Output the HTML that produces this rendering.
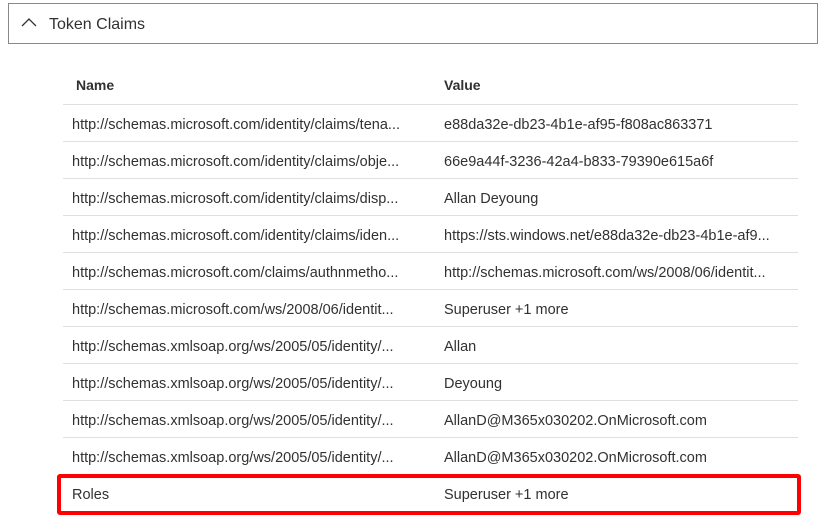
<!DOCTYPE html>
<html><head><meta charset="utf-8"><style>
html,body{margin:0;padding:0;background:#fff;width:829px;height:518px;overflow:hidden;font-family:"Liberation Sans",sans-serif;color:#323130}
.hdr{position:absolute;left:8px;top:3px;width:808px;height:39px;border:1px solid #8a8886;box-sizing:content-box}
.hdr svg{position:absolute;left:11px;top:13px}
.hdr span{position:absolute;left:40px;top:12px;font-size:16px;color:#323130}
.th{position:absolute;top:77px;font-size:14px;font-weight:bold;color:#323130}
.line{position:absolute;left:63px;width:735px;height:1px;background:#e1dfdd}
.c{position:absolute;font-size:14.5px;white-space:nowrap;overflow:hidden;color:#323130}
.n{left:72px;width:365px}.v{left:444px;width:354px}
.red{position:absolute;left:57px;top:474px;width:736px;height:33px;border:4px solid #f00;border-radius:3px}
</style></head><body>
<div class="hdr"><svg width="18" height="11" viewBox="0 0 18 11"><path d="M2 9 L9 2 L16 9" fill="none" stroke="#323130" stroke-width="1.3"/></svg><span>Token Claims</span></div>
<div class="th" style="left:76px">Name</div>
<div class="th" style="left:444px">Value</div>
<div class="line" style="top:104px"></div>
<div class="c n" style="top:117px">http://schemas.microsoft.com/identity/claims/tena...</div><div class="c v" style="top:117px">e88da32e-db23-4b1e-af95-f808ac863371</div>
<div class="line" style="top:141px"></div>
<div class="c n" style="top:154px">http://schemas.microsoft.com/identity/claims/obje...</div><div class="c v" style="top:154px">66e9a44f-3236-42a4-b833-79390e615a6f</div>
<div class="line" style="top:178px"></div>
<div class="c n" style="top:191px">http://schemas.microsoft.com/identity/claims/disp...</div><div class="c v" style="top:191px">Allan Deyoung</div>
<div class="line" style="top:215px"></div>
<div class="c n" style="top:228px">http://schemas.microsoft.com/identity/claims/iden...</div><div class="c v" style="top:228px">https://sts.windows.net/e88da32e-db23-4b1e-af9...</div>
<div class="line" style="top:252px"></div>
<div class="c n" style="top:265px">http://schemas.microsoft.com/claims/authnmetho...</div><div class="c v" style="top:265px">http://schemas.microsoft.com/ws/2008/06/identit...</div>
<div class="line" style="top:289px"></div>
<div class="c n" style="top:302px">http://schemas.microsoft.com/ws/2008/06/identit...</div><div class="c v" style="top:302px">Superuser +1 more</div>
<div class="line" style="top:326px"></div>
<div class="c n" style="top:339px">http://schemas.xmlsoap.org/ws/2005/05/identity/...</div><div class="c v" style="top:339px">Allan</div>
<div class="line" style="top:363px"></div>
<div class="c n" style="top:376px">http://schemas.xmlsoap.org/ws/2005/05/identity/...</div><div class="c v" style="top:376px">Deyoung</div>
<div class="line" style="top:400px"></div>
<div class="c n" style="top:413px">http://schemas.xmlsoap.org/ws/2005/05/identity/...</div><div class="c v" style="top:413px">AllanD@M365x030202.OnMicrosoft.com</div>
<div class="line" style="top:437px"></div>
<div class="c n" style="top:450px">http://schemas.xmlsoap.org/ws/2005/05/identity/...</div><div class="c v" style="top:450px">AllanD@M365x030202.OnMicrosoft.com</div>
<div class="line" style="top:474px"></div>
<div class="c n" style="top:487px">Roles</div><div class="c v" style="top:487px">Superuser +1 more</div>
<div class="red"></div>
</body></html>
